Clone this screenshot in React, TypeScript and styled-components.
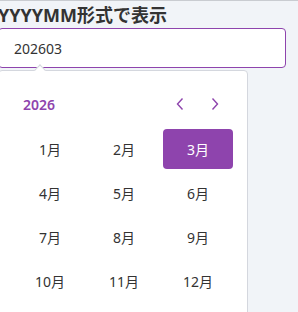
import React, { useState } from "react";
import styled, { createGlobalStyle } from "styled-components";

const GlobalStyle = createGlobalStyle`
  html, body {
    margin: 0;
    padding: 0;
    background: #f1f4f8;
    font-family: "Noto Sans", "Noto Sans CJK JP", sans-serif;
    color: #333;
  }
  body {
    border-top: 1px solid #c9ccd1;
    height: 311px;
    overflow: hidden;
  }
`;

const Wrapper = styled.div`
  margin-left: -2px;
  width: 288px;
`;

const Title = styled.h2`
  margin: 0;
  height: 27px;
  font-size: 18px;
  line-height: 28px;
  font-weight: 700;
  color: #333;
  white-space: nowrap;
`;

const Field = styled.div`
  position: relative;
`;

const Input = styled.input`
  box-sizing: border-box;
  width: 100%;
  height: 40px;
  border: 1px solid #8e44ad;
  border-radius: 4px;
  padding: 0 15px;
  font-family: inherit;
  font-size: 14px;
  color: #333;
  background: #fff;
  outline: none;
`;

const Popover = styled.div`
  position: relative;
  box-sizing: border-box;
  width: 250px;
  margin-top: 2px;
  padding: 16px;
  background: #fff;
  border: 1px solid #d4d7de;
  border-radius: 4px;

  &::before {
    content: "";
    position: absolute;
    top: -5px;
    left: 37px;
    width: 7px;
    height: 7px;
    background: #fff;
    border-left: 1px solid #d4d7de;
    border-top: 1px solid #d4d7de;
    transform: rotate(45deg);
  }
`;

const Header = styled.div`
  display: flex;
  align-items: center;
  justify-content: space-between;
  height: 34px;
  margin-bottom: 8px;
  padding: 0 6px 0 8px;
`;

const Year = styled.span`
  font-size: 14px;
  font-weight: 600;
  color: #8e44ad;
`;

const NavGroup = styled.div`
  display: flex;
  gap: 15px;
`;

const NavButton = styled.button`
  display: flex;
  align-items: center;
  justify-content: center;
  width: 20px;
  height: 20px;
  padding: 0;
  border: none;
  background: none;
  color: #8e44ad;
  cursor: pointer;
`;

const Grid = styled.div`
  display: grid;
  grid-template-columns: repeat(3, 70px);
  grid-auto-rows: 40px;
  gap: 4px;
`;

const Month = styled.button<{ $active?: boolean }>`
  border: none;
  border-radius: 4px;
  font-family: inherit;
  font-size: 14px;
  color: ${(p) => (p.$active ? "#fff" : "#333")};
  background: ${(p) => (p.$active ? "#8e44ad" : "transparent")};
  cursor: pointer;
`;

const Chevron = ({ dir }: { dir: "left" | "right" }) => (
  <svg width="10" height="14" viewBox="0 0 10 14" fill="none">
    <path
      d={dir === "left" ? "M7.5 1.5 L2.5 7 L7.5 12.5" : "M2.5 1.5 L7.5 7 L2.5 12.5"}
      stroke="currentColor"
      strokeWidth="1.4"
    />
  </svg>
);

const App: React.FC = () => {
  const [month, setMonth] = useState(3);
  const months = Array.from({ length: 12 }, (_, i) => i + 1);

  return (
    <>
      <GlobalStyle />
      <Wrapper>
        <Title>YYYYMM形式で表示</Title>
        <Field>
          <Input value={`2026${String(month).padStart(2, "0")}`} readOnly />
        </Field>
        <Popover>
          <Header>
            <Year>2026</Year>
            <NavGroup>
              <NavButton aria-label="prev">
                <Chevron dir="left" />
              </NavButton>
              <NavButton aria-label="next">
                <Chevron dir="right" />
              </NavButton>
            </NavGroup>
          </Header>
          <Grid>
            {months.map((m) => (
              <Month key={m} $active={m === month} onClick={() => setMonth(m)}>
                {m}月
              </Month>
            ))}
          </Grid>
        </Popover>
      </Wrapper>
    </>
  );
};

export default App;
